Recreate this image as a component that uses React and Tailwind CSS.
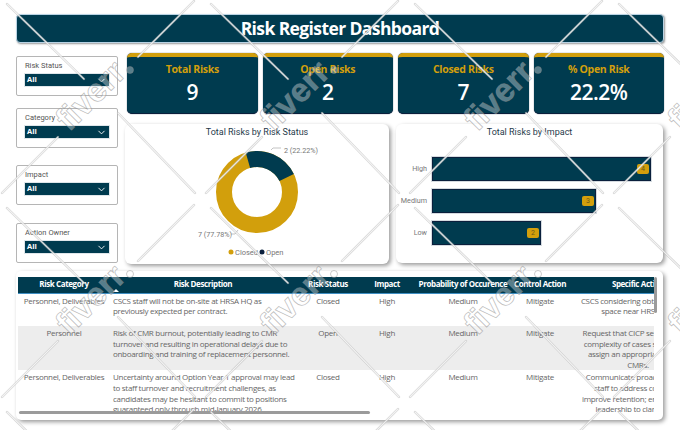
import React from "react";
import { ChevronDown } from "lucide-react";

const filters = [
  { label: "Risk Status", cls: "mt-[3px]" },
  { label: "Category", cls: "mt-[12px]" },
  { label: "Impact", cls: "mt-[17px]" },
  { label: "Action Owner", cls: "mt-[18px]" },
];

const cards = [
  { label: "Total Risks", value: "9" },
  { label: "Open Risks", value: "2" },
  { label: "Closed Risks", value: "7" },
  { label: "% Open Risk", value: "22.2%" },
];

const bars = [
  { label: "High", value: 4, width: "w-[219px]" },
  { label: "Medium", value: 3, width: "w-[164px]" },
  { label: "Low", value: 2, width: "w-[109px]" },
];

const rows = [
  {
    cat: "Personnel, Deliverables",
    desc: ["CSCS staff will not be on-site at HRSA HQ as", "previously expected per contract."],
    status: "Closed",
    action: ["CSCS considering obtaining office", "space near HRSA HQ."],
    cls: "h-[33px]",
  },
  {
    cat: "Personnel",
    desc: [
      "Risk of CMR burnout, potentially leading to CMR",
      "turnover and resulting in operational delays due to",
      "onboarding and training of replacement personnel.",
    ],
    status: "Open",
    action: ["Request that CICP send monthly", "complexity of cases so CICP can", "assign an appropriate lead to", "CMRs."],
    cls: "h-[44px] bg-[#ededed]",
  },
  {
    cat: "Personnel, Deliverables",
    desc: [
      "Uncertainty around Option Year 1 approval may lead",
      "to staff turnover and recruitment challenges, as",
      "candidates may be hesitant to commit to positions",
      "guaranteed only through mid-January 2026.",
    ],
    status: "Closed",
    action: ["Communicate proactively with", "staff to address concerns,", "improve retention; engage HRSA", "leadership to clarify CMR"],
    cls: "h-[44px]",
  },
];

function Lines({ items }) {
  return items.map((line) => <div key={line}>{line}</div>);
}

function Slicer({ label, cls }) {
  return (
    <div className={`h-[40px] border border-[#b5b5b5] rounded-[2px] px-[7px] pt-[3px] ${cls}`}>
      <div className="font-['Roboto',sans-serif] text-[7.5px] leading-[11px] pl-[1px] text-[#555]">{label}</div>
      <div className="mt-[2px] h-[14px] bg-[#003b4f] border border-[#dfe6ea] flex items-center justify-between px-[2px]">
        <span className="font-['Open_Sans',sans-serif] text-[7.5px] font-bold text-white">All</span>
        <ChevronDown size={11} strokeWidth={2} className="text-white" />
      </div>
    </div>
  );
}

function Card({ label, value }) {
  return (
    <div className="flex-1 h-[61px] bg-[#003b4f] rounded-[5px] border-t-[4px] border-[#d29f0c] border-b border-b-[#0a1f3c] text-center font-['Open_Sans',sans-serif] shadow-[0_0_1px_#0a1f3c]">
      <div className="mt-[5px] text-[10.5px] tracking-[-0.3px] leading-[15px] font-bold text-[#d29f0c]">{label}</div>
      <div className="mt-[1px] text-[21px] tracking-[-0.5px] leading-[29px] font-semibold text-white">{value}</div>
    </div>
  );
}

function DonutChart() {
  return (
    <svg width="264" height="118" viewBox="0 0 264 118" className="font-['Roboto',sans-serif]">
      {/* center of the ring sits at 132,48 */}
      <circle cx="132" cy="48" r="33" fill="none" stroke="#d29f0c" strokeWidth="16" />
      <circle
        cx="132"
        cy="48"
        r="33"
        fill="none"
        stroke="#003b4f"
        strokeWidth="16"
        pathLength="100"
        strokeDasharray="22.22 77.78"
        transform="rotate(-106 132 48)"
      />
      <path d="M146 6 L148 4 L156 4" fill="none" stroke="#aaa" strokeWidth="0.7" />
      <text x="159" y="9" fontSize="7.2" fill="#777">
        2 (22.22%)
      </text>
      <path d="M106 90 L110 90 L113 86" fill="none" stroke="#aaa" strokeWidth="0.7" />
      <text x="73" y="93" fontSize="7.2" fill="#777">
        7 (77.78%)
      </text>
      <circle cx="106" cy="108" r="2.5" fill="#d29f0c" />
      <text x="110" y="111" fontSize="7.5" fill="#777">
        Closed
      </text>
      <circle cx="137" cy="108" r="2.5" fill="#0a1f3c" />
      <text x="141" y="111" fontSize="7.5" fill="#777">
        Open
      </text>
    </svg>
  );
}

function Watermark() {
  const tiles = [];
  for (let y = 0; y < 3; y++) {
    for (let x = 0; x < 4; x++) {
      tiles.push([x * 204, y * 204]);
    }
  }
  const segs = [
    "M7 4 L84 79",
    "M118 113 L195 193",
    "M138 57 L194 1",
    "M2 193 L58 137",
  ];
  return (
    <svg width="680" height="430" viewBox="0 0 680 430" className="absolute left-0 top-0 pointer-events-none">
      {tiles.map(([tx, ty]) => (
        <g key={`${tx}-${ty}`} transform={`translate(${tx} ${ty})`}>
          {segs.map((d) => (
            <g key={d}>
              <path d={d} stroke="#b4b4b4" strokeOpacity="0.6" strokeWidth="2.4" strokeLinecap="round" fill="none" />
              <path d={d} stroke="#fff" strokeOpacity="0.75" strokeWidth="1.1" strokeLinecap="round" fill="none" />
            </g>
          ))}
          <text
            x="92"
            y="106"
            textAnchor="middle"
            transform="rotate(-45 92 97)"
            fontFamily="'Liberation Sans', sans-serif"
            fontWeight="700"
            fontSize="33"
            fill="#fff"
            fillOpacity="0.35"
            stroke="#8a8a8a"
            strokeOpacity="0.55"
            strokeWidth="0.8"
          >
            fiverr
          </text>
          <circle cx="130" cy="70" r="3.5" fill="#fff" fillOpacity="0.35" stroke="#8a8a8a" strokeOpacity="0.55" strokeWidth="0.8" />
        </g>
      ))}
    </svg>
  );
}

export default function App() {
  return (
    <div className="relative w-[680px] h-[430px] overflow-hidden bg-white px-[16px] pt-[14px]">
      <div className="h-[29px] w-[648px] bg-[#003b4f] rounded-[4px] border border-[#b9d3e4] flex items-center justify-center shadow-[1px_1px_2px_#999]">
        <h1 className="font-['Open_Sans',sans-serif] text-[17.5px] tracking-[-0.6px] font-bold text-white">Risk Register Dashboard</h1>
      </div>

      <div className="flex mt-[10px]">
        <div className="w-[102px] shrink-0">
          {filters.map((f) => (
            <Slicer key={f.label} {...f} />
          ))}
        </div>

        <div className="ml-[7px] w-[539px]">
          <div className="flex gap-[5px] pl-[2px]">
            {cards.map((c) => (
              <Card key={c.label} {...c} />
            ))}
          </div>

          <div className="flex gap-[7px] mt-[10px]">
            <div className="w-[264px] h-[140px] bg-white rounded-[6px] shadow-[2px_2px_4px_#9a9a9a]">
              <div className="font-['Roboto',sans-serif] text-[9px] leading-[14px] text-center text-[#1f3a4a] pt-[1px]">
                Total Risks by Risk Status
              </div>
              <div className="mt-[5px]">
                <DonutChart />
              </div>
            </div>

            <div className="w-[267px] h-[139px] bg-white rounded-[6px] shadow-[2px_2px_4px_#9a9a9a]">
              <div className="font-['Roboto',sans-serif] text-[9px] leading-[14px] text-center text-[#1f3a4a] pt-[1px]">
                Total Risks by Impact
              </div>
              <div className="mt-[18px] flex flex-col gap-[8px]">
                {bars.map((b) => (
                  <div key={b.label} className="flex items-center h-[24px]">
                    <div className="w-[36px] pr-[5px] text-right font-['Roboto',sans-serif] text-[7.2px] text-[#777]">{b.label}</div>
                    <div className={`${b.width} h-[24px] bg-[#003b4f] border border-[#0a1f3c] outline outline-[#d5dbe0] flex items-center justify-end pr-[1px]`}>
                      <span className="w-[12px] h-[10px] rounded-[2px] bg-[#d29f0c] text-center font-['Roboto',sans-serif] text-[7px] leading-[10px] text-[#6b5a1c]">
                        {b.value}
                      </span>
                    </div>
                  </div>
                ))}
              </div>
            </div>
          </div>
        </div>
      </div>

      <div className="relative mt-[7px] w-[647px] h-[149px] bg-white rounded-[5px] shadow-[2px_2px_4px_#9a9a9a] pl-[2px] pt-[6px]">
        <div className="w-[636px] h-[135px] overflow-hidden">
          <table className="table-fixed w-[690px] font-['Open_Sans',sans-serif] text-[8px] tracking-[-0.3px] leading-[10.6px] text-[#666]">
            <colgroup>
              <col className="w-[92px]" />
              <col className="w-[186px]" />
              <col className="w-[64px]" />
              <col className="w-[54px]" />
              <col className="w-[98px]" />
              <col className="w-[56px]" />
              <col className="w-[140px]" />
            </colgroup>
            <thead>
              <tr className="h-[16px] bg-[#003b4f] text-white border-b border-[#3f8fc4] tracking-[-0.4px]">
                <th className="font-bold">Risk Category</th>
                <th className="font-bold">Risk Description</th>
                <th className="font-bold whitespace-nowrap">Risk Status</th>
                <th className="font-bold">Impact</th>
                <th className="font-bold whitespace-nowrap">Probability of Occurence</th>
                <th className="font-bold whitespace-nowrap">Control Action</th>
                <th className="font-bold">Specific Action</th>
              </tr>
            </thead>
            <tbody>
              {rows.map((r) => (
                <tr key={r.desc[0]} className={`${r.cls} align-top`}>
                  <td className="text-center pt-[2px] whitespace-nowrap">{r.cat}</td>
                  <td className="pl-[3px] pt-[2px] whitespace-nowrap">
                    <Lines items={r.desc} />
                  </td>
                  <td className="text-center pt-[2px]">{r.status}</td>
                  <td className="text-center pt-[2px]">High</td>
                  <td className="text-center pt-[2px]">Medium</td>
                  <td className="text-center pt-[2px]">Mitigate</td>
                  <td className="text-center pt-[2px] whitespace-nowrap">
                    <Lines items={r.action} />
                  </td>
                </tr>
              ))}
            </tbody>
          </table>
        </div>
        <span className="absolute left-[97px] top-[18px] w-0 h-0 border-x-[3px] border-x-transparent border-b-[3px] border-b-white" />
        <div className="absolute left-[3px] top-[140px] w-[351px] h-[3px] rounded-full bg-[#9b9b9b]" />
        <div className="absolute left-[638px] top-[6px] w-[3px] h-[36px] rounded-full bg-[#9b9b9b]" />
      </div>

      <Watermark />
    </div>
  );
}
